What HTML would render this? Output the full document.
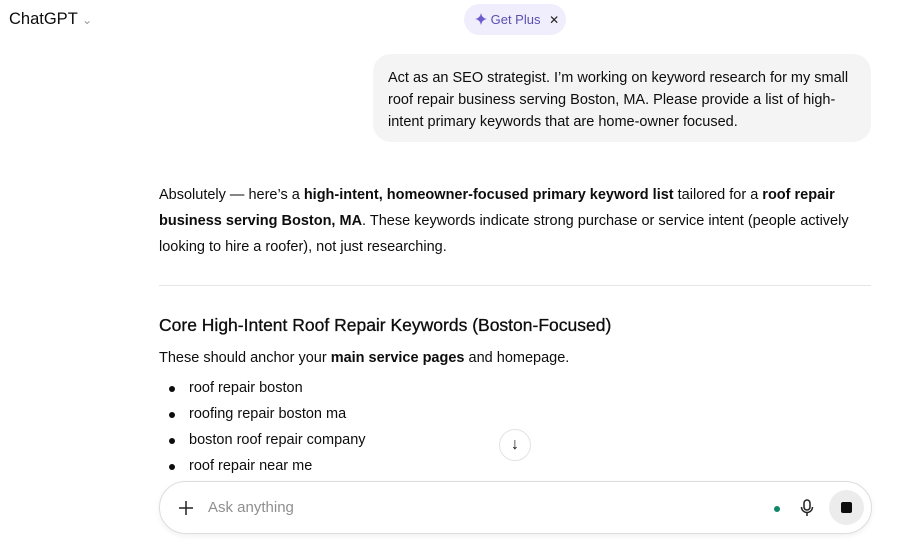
<!DOCTYPE html>
<html><head><meta charset="utf-8"><style>
*{margin:0;padding:0;box-sizing:border-box}
body{width:900px;height:542px;background:#fff;font-family:"Liberation Sans",sans-serif;color:#0d0d0d;position:relative;overflow:hidden;font-size:14.5px}
.abs{position:absolute}
b{font-weight:bold}
.bubble{left:373px;top:54px;width:498px;height:88px;background:#f4f4f4;border-radius:18px;padding:13px 15px;line-height:22px;font-size:14.5px}
.p{left:159px;width:712px;line-height:26px}
ul{list-style:none}
li{position:relative;padding-left:30px;height:26px;line-height:26px}
li:before{content:"";position:absolute;left:10px;top:11px;width:6px;height:6px;border-radius:50%;background:#0d0d0d}
</style></head><body>
<div class="abs" style="left:9px;top:10px;font-size:16.5px;">ChatGPT <span style="color:#999;font-size:12px">&#8964;</span></div>
<div class="abs" style="left:464px;top:4px;width:102px;height:31px;border-radius:16px;background:#f0eefc;color:#5a4fb0;font-size:13px;line-height:31px;padding-left:11px">
<svg width="12" height="12" viewBox="0 0 12 12" style="vertical-align:-1px"><path d="M6 0 Q6.8 5.2 12 6 Q6.8 6.8 6 12 Q5.2 6.8 0 6 Q5.2 5.2 6 0Z" fill="#6a5bd0"/></svg>
Get Plus <span style="color:#222;margin-left:5px;font-size:12px">&#10005;</span></div>
<div class="abs bubble">Act as an SEO strategist. I’m working on keyword research for my small roof repair business serving Boston, MA. Please provide a list of high-intent primary keywords that are home-owner focused.</div>
<div class="abs p" style="top:182px">Absolutely — here’s a <b>high-intent, homeowner-focused primary keyword list</b> tailored for a <b>roof repair business serving Boston, MA</b>. These keywords indicate strong purchase or service intent (people actively looking to hire a roofer), not just researching.</div>
<div class="abs" style="left:159px;top:285px;width:712px;height:1px;background:#e5e5e5"></div>
<div class="abs" style="left:159px;top:315px;font-size:17.5px;-webkit-text-stroke:0.3px #0d0d0d">Core High-Intent Roof Repair Keywords (Boston-Focused)</div>
<div class="abs p" style="top:345px">These should anchor your <b>main service pages</b> and homepage.</div>
<ul class="abs" style="left:159px;top:375px">
<li>roof repair boston</li><li>roofing repair boston ma</li><li>boston roof repair company</li><li>roof repair near me</li></ul>
<div class="abs" style="left:499px;top:429px;width:32px;height:32px;border-radius:50%;border:1px solid #e3e3e3;background:#fff;text-align:center;line-height:30px;font-size:16px">&#8595;</div>
<div class="abs" style="left:159px;top:481px;width:713px;height:53px;border-radius:27px;border:1px solid #ddd;box-shadow:0 2px 6px rgba(0,0,0,.06);background:#fff">
<svg class="abs" style="left:18px;top:18px" width="16" height="16" viewBox="0 0 16 16"><path d="M8 1v14M1 8h14" stroke="#222" stroke-width="1.5"/></svg>
<div class="abs" style="left:48px;top:17px;color:#8f8f8f;font-size:15px">Ask anything</div>
<div class="abs" style="left:614px;top:24px;width:6px;height:6px;border-radius:50%;background:#10876a"></div>
<svg class="abs" style="left:639px;top:17px" width="16" height="18" viewBox="0 0 16 18"><rect x="5" y="1" width="6" height="10" rx="3" fill="none" stroke="#222" stroke-width="1.5"/><path d="M2.5 8a5.5 5.5 0 0 0 11 0M8 13.5V17" fill="none" stroke="#222" stroke-width="1.5"/></svg>
<div class="abs" style="left:669px;top:8px;width:35px;height:35px;border-radius:50%;background:#ececec"><div class="abs" style="left:12px;top:12px;width:11px;height:11px;border-radius:2px;background:#0d0d0d"></div></div>
</div>
</body></html>
